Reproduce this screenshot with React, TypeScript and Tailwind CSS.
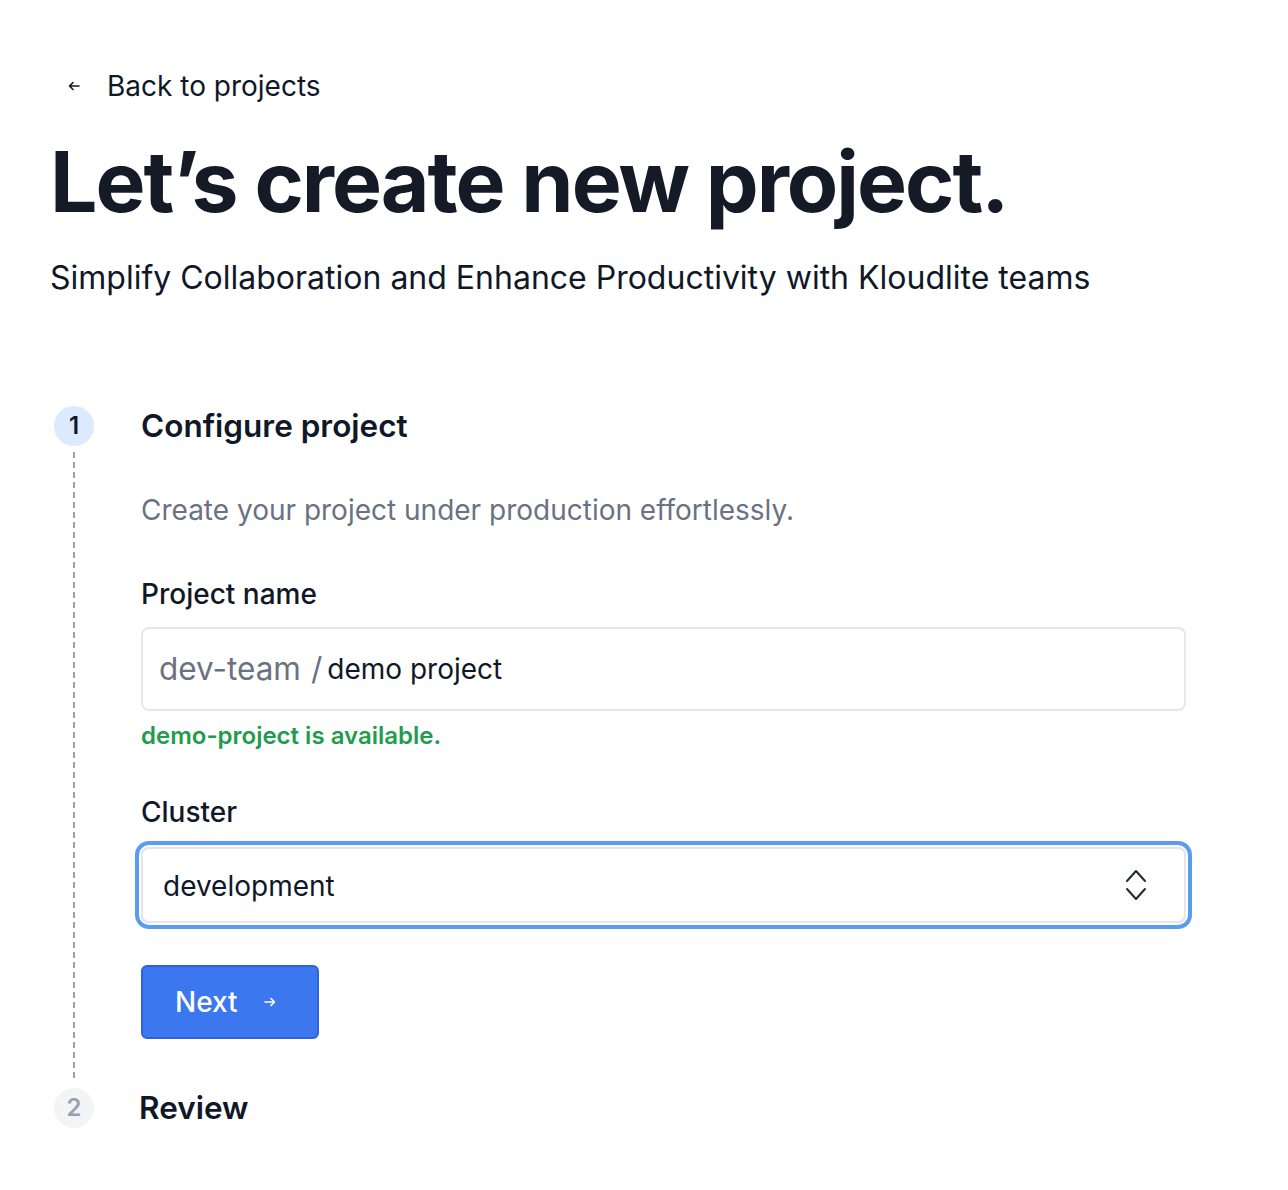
import React from "react";

function ArrowLeft({ className }: { className?: string }) {
  return (
    <svg viewBox="0 0 12 10" className={className} fill="none" stroke="currentColor" strokeWidth="1.6" strokeLinecap="round" strokeLinejoin="round">
      <path d="M11 5H1.5M5 1.5L1.5 5L5 8.5" />
    </svg>
  );
}

function ArrowRight({ className }: { className?: string }) {
  return (
    <svg viewBox="0 0 12 10" className={className} fill="none" stroke="currentColor" strokeWidth="1.6" strokeLinecap="round" strokeLinejoin="round">
      <path d="M1 5h9.5M7 1.5L10.5 5L7 8.5" />
    </svg>
  );
}

function UpDown() {
  return (
    <svg viewBox="0 0 22 32" className="w-[22px] h-[32px] text-gray-800" fill="none" stroke="currentColor" strokeWidth="2" strokeLinecap="round" strokeLinejoin="round">
      <path d="M2 12L11 2L20 12" />
      <path d="M2 20L11 30L20 20" />
    </svg>
  );
}

export default function App() {
  return (
    <div className="min-h-[1190px] bg-white font-['Inter',sans-serif] text-gray-900 pl-[50px] pt-[68px]">
      {/* Header */}
      <button className="flex items-center gap-[27px] pl-[18px] text-[28px] leading-[36px] text-gray-900">
        <ArrowLeft className="w-[12px] h-[10px]" />
        <span>Back to projects</span>
      </button>
      <h1 className="mt-[36px] text-[84px] leading-[84px] font-bold tracking-[-0.024em] text-[#141a26]">
        Let’s create new project.
      </h1>
      <p className="mt-[36px] text-[32px] leading-[36px] text-gray-900">
        Simplify Collaboration and Enhance Productivity with Kloudlite teams
      </p>

      {/* Stepper */}
      <div className="mt-[110px] pl-[4px]">
        <div className="flex">
          <div className="w-10 flex flex-col items-center">
            <div className="w-10 h-10 rounded-full bg-blue-100 flex items-center justify-center text-[24px] font-semibold text-gray-900">
              1
            </div>
            <div className="flex-1 w-[2px] mt-[6px] mb-[6px] bg-[repeating-linear-gradient(to_bottom,#9ca3af_0px,#9ca3af_6px,transparent_6px,transparent_10px)]" />
          </div>
          <div className="ml-[47px] w-[1045px] pb-[48px]">
            <h2 className="text-[31.5px] leading-[40px] font-semibold text-gray-900">
              Configure project
            </h2>
            <p className="mt-[46px] text-[28px] leading-[36px] text-gray-500">
              Create your project under production effortlessly.
            </p>

            <label className="block mt-[48px] text-[28px] leading-[36px] font-medium text-gray-900">
              Project name
            </label>
            <div className="mt-[15px] h-[84px] rounded-lg border-2 border-gray-200 flex items-center px-[16px]">
              <span className="text-[31.5px] text-gray-500">dev-team</span>
              <span className="ml-[10px] text-[31.5px] text-gray-500">/</span>
              <span className="ml-[5px] text-[28px] text-gray-900">demo project</span>
            </div>
            <p className="mt-[9px] text-[24px] leading-[32px] font-semibold text-[#1f9d4c]">
              demo-project is available.
            </p>

            <label className="block mt-[42px] text-[28px] leading-[36px] font-medium text-gray-900">
              Cluster
            </label>
            <div className="mt-[17px] h-[76px] rounded-lg border-2 border-gray-200 shadow-[0_0_0_2px_#ffffff,0_0_0_6px_#5b9cf1] flex items-center justify-between pl-[20px] pr-[37px]">
              <span className="text-[28px] leading-[36px] mt-[2px] text-gray-900">development</span>
              <UpDown />
            </div>

            <button className="mt-[42px] h-[74px] w-[178px] rounded-md bg-[#3b77ee] border-2 border-[#2d62dc] flex items-center pl-[32px] gap-[26px] text-white text-[28px] font-medium">
              <span>Next</span>
              <ArrowRight className="w-[12px] h-[10px]" />
            </button>
          </div>
        </div>

        <div className="flex items-center mt-[1px]">
          <div className="w-10 h-10 rounded-full bg-gray-100 flex items-center justify-center text-[24px] font-semibold text-gray-400">
            2
          </div>
          <h2 className="ml-[45px] text-[31.5px] leading-[40px] font-semibold text-gray-900">
            Review
          </h2>
        </div>
      </div>
    </div>
  );
}
